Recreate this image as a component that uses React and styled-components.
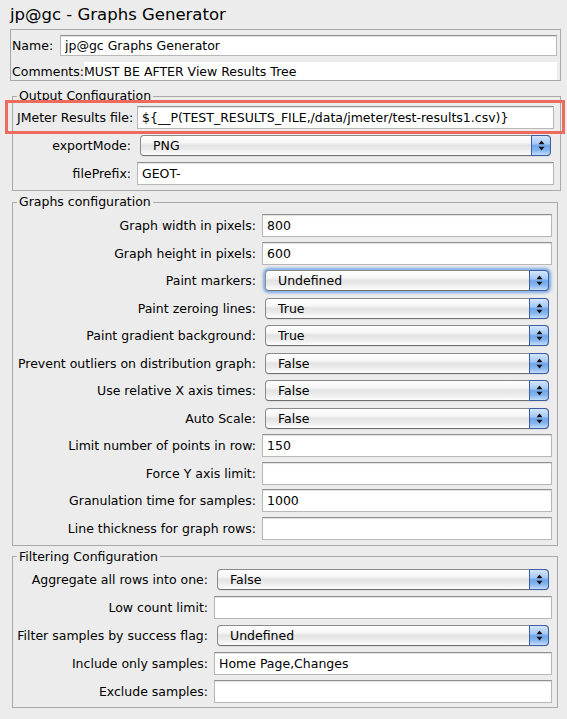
import React from 'react';
import styled, { createGlobalStyle } from 'styled-components';

const GlobalStyle = createGlobalStyle`
  html, body {
    margin: 0;
    padding: 0;
    background: #ececec;
  }
  body {
    font-family: "DejaVu Sans", "Lucida Grande", sans-serif;
    font-size: 12.5px;
    color: #000;
  }
  * { box-sizing: border-box; }
`;

const Page = styled.div`
  width: 567px;
  height: 719px;
  padding: 0 6px 0 10px;
  background: #ececec;
  overflow: hidden;
`;

const Title = styled.h1`
  margin: 0;
  height: 29px;
  line-height: 29px;
  font-size: 16.5px;
  font-weight: normal;
`;

const NamePanel = styled.div`
  border: 1px solid #a9a9a9;
  padding: 5px 3px 0 1px;
  display: flex;
  flex-direction: column;
  gap: 6px;
`;

const NameRow = styled.div`
  display: flex;
  align-items: center;
  height: ${p => p.h}px;
`;

const NameLabel = styled.span`
  flex: 0 0 ${p => p.w || 'auto'};
  width: ${p => p.w || 'auto'};
  white-space: nowrap;
`;

const CommentBox = styled.div`
  flex: 1;
  height: 100%;
  background: #fff;
  line-height: 19px;
  white-space: nowrap;
`;

const Panel = styled.fieldset`
  margin: ${p => p.mt}px ${p => p.mr}px 0 2px;
  border: 1px solid #a9a9a9;
  padding: ${p => p.pt}px ${p => p.pr}px ${p => p.pb}px 4px;
  min-width: 0;
`;

const Legend = styled.legend`
  padding: 0 2px;
  line-height: 16px;
  font-size: 12.5px;
`;

const Grid = styled.div`
  position: relative;
  display: grid;
  grid-template-columns: ${p => p.labelW}px 1fr;
  column-gap: 6px;
  row-gap: ${p => p.gap}px;
  grid-auto-rows: 23px;
`;

const Label = styled.label`
  text-align: right;
  align-self: center;
  white-space: nowrap;
`;

const Cell = styled.div`
  display: flex;
  flex-direction: column;
  justify-content: center;
`;

const TextField = styled.input`
  height: 23px;
  width: 100%;
  border: 1px solid #b8b8b8;
  border-top-color: #8f8f8f;
  box-shadow: inset 0 1px 1px rgba(0, 0, 0, 0.12);
  background: #fff;
  padding: 0 4px;
  font: inherit;
  color: #000;
  outline: none;
`;

const NameField = styled(TextField)`
  flex: 1;
  height: 21px;
`;

/* red annotation frame drawn over the first output row */
const Highlight = styled.div`
  position: absolute;
  left: -12px;
  right: -11px;
  top: -6px;
  height: 34px;
  border: 3px solid #ed6a5c;
  pointer-events: none;
`;

const SelectBox = styled.div`
  height: 21px;
  margin: 0 3px;
  display: flex;
  align-items: stretch;
  border: 1px solid #8a8a8a;
  border-bottom-color: #6f6f6f;
  border-radius: 4px;
  background: linear-gradient(#ffffff 0%, #f6f6f6 35%, #e3e3e3 50%, #ebebeb 70%, #fdfdfd 100%);
  box-shadow: ${p => (p.focused
    ? '0 0 0 1px #8fb7ea, 0 0 3px 2px #7aa6e3'
    : '0 1px 0 rgba(0, 0, 0, 0.06)')};
`;

const SelectValue = styled.span`
  flex: 1;
  padding-left: 12px;
  line-height: 19px;
  white-space: nowrap;
`;

const ArrowButton = styled.span`
  flex: 0 0 20px;
  margin: -1px -1px -1px 0;
  border: 1px solid #3c5da4;
  border-radius: 0 4px 4px 0;
  background: linear-gradient(#d5e6fb 0%, #a6c9f3 40%, #6fa5ea 52%, #86b6ef 75%, #c4defb 100%);
  display: flex;
  align-items: center;
  justify-content: center;
`;

const Arrows = () => (
  <svg width="7" height="11" viewBox="0 0 7 11">
    <path d="M0.5 4.2 L3.5 0.5 L6.5 4.2 Z" fill="#111" />
    <path d="M0.5 6.8 L3.5 10.5 L6.5 6.8 Z" fill="#111" />
  </svg>
);

function Select({ value, focused }) {
  return (
    <SelectBox focused={focused}>
      <SelectValue>{value}</SelectValue>
      <ArrowButton><Arrows /></ArrowButton>
    </SelectBox>
  );
}

function Row({ label, value, select, focused }) {
  return (
    <>
      <Label>{label}</Label>
      <Cell>
        {select
          ? <Select value={value} focused={focused} />
          : <TextField readOnly value={value || ''} />}
      </Cell>
    </>
  );
}

const graphRows = [
  { label: 'Graph width in pixels:', value: '800' },
  { label: 'Graph height in pixels:', value: '600' },
  { label: 'Paint markers:', value: 'Undefined', select: true, focused: true },
  { label: 'Paint zeroing lines:', value: 'True', select: true },
  { label: 'Paint gradient background:', value: 'True', select: true },
  { label: 'Prevent outliers on distribution graph:', value: 'False', select: true },
  { label: 'Use relative X axis times:', value: 'False', select: true },
  { label: 'Auto Scale:', value: 'False', select: true },
  { label: 'Limit number of points in row:', value: '150' },
  { label: 'Force Y axis limit:', value: '' },
  { label: 'Granulation time for samples:', value: '1000' },
  { label: 'Line thickness for graph rows:', value: '' },
];

const filterRows = [
  { label: 'Aggregate all rows into one:', value: 'False', select: true },
  { label: 'Low count limit:', value: '' },
  { label: 'Filter samples by success flag:', value: 'Undefined', select: true },
  { label: 'Include only samples:', value: 'Home Page,Changes' },
  { label: 'Exclude samples:', value: '' },
];

export default function App() {
  return (
    <Page>
      <GlobalStyle />
      <Title>jp@gc - Graphs Generator</Title>

      <NamePanel>
        <NameRow h={21}>
          <NameLabel w="48px">Name:</NameLabel>
          <NameField readOnly value="jp@gc Graphs Generator" />
        </NameRow>
        <NameRow h={18}>
          <NameLabel>Comments:</NameLabel>
          <CommentBox>MUST BE AFTER View Results Tree</CommentBox>
        </NameRow>
      </NamePanel>

      <Panel mt={7} mr={0} pt={2} pr={6} pb={5}>
        <Legend>Output Configuration</Legend>
        <Grid labelW={114} gap={5}>
          <Row
            label="JMeter Results file:"
            value="${__P(TEST_RESULTS_FILE,/data/jmeter/test-results1.csv)}"
          />
          <Row label="exportMode:" value="PNG" select />
          <Row label="filePrefix:" value="GEOT-" />
          <Highlight />
        </Grid>
      </Panel>

      <Panel mt={3} mr={3} pt={4} pr={5} pb={5}>
        <Legend>Graphs configuration</Legend>
        <Grid labelW={239} gap={4.5}>
          {graphRows.map(r => <Row key={r.label} {...r} />)}
        </Grid>
      </Panel>

      <Panel mt={3} mr={3} pt={3} pr={5} pb={4}>
        <Legend>Filtering Configuration</Legend>
        <Grid labelW={191} gap={5}>
          {filterRows.map(r => <Row key={r.label} {...r} />)}
        </Grid>
      </Panel>
    </Page>
  );
}
